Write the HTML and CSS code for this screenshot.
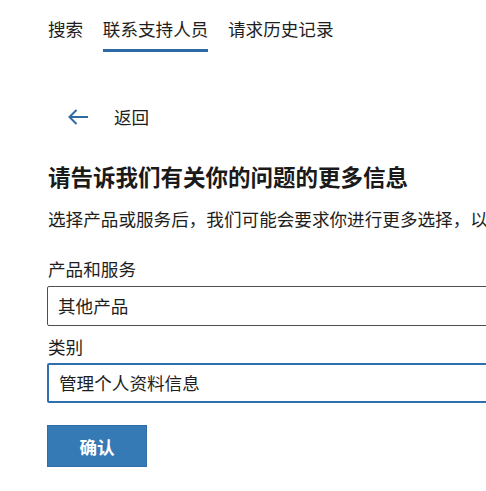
FILE: index.html
```html
<!DOCTYPE html>
<html lang="zh-CN">
<head>
<meta charset="utf-8">
<title>联系支持人员</title>
<link rel="stylesheet" href="styles.css">
</head>
<body>
<div class="page">
  <nav class="tabs">
    <a class="tab">搜索</a>
    <a class="tab active">联系支持人员</a>
    <a class="tab">请求历史记录</a>
  </nav>
  <div class="back">
    <svg class="back-icon" width="22" height="18" viewBox="0 0 22 18" aria-hidden="true">
      <path d="M21 9H2.5 M9.5 2L2.5 9l7 7" fill="none" stroke="#2f6aa3" stroke-width="2"/>
    </svg>
    <span class="back-text">返回</span>
  </div>
  <h1 class="title">请告诉我们有关你的问题的更多信息</h1>
  <p class="desc">选择产品或服务后，我们可能会要求你进行更多选择，以便我们更好地为你提供帮助。</p>
  <div class="form">
    <div class="label label-first">产品和服务</div>
    <div class="field">其他产品</div>
    <div class="label label-second">类别</div>
    <div class="field field-focus">管理个人资料信息</div>
    <button class="confirm">确认</button>
  </div>
</div>
</body>
</html>
```

FILE: styles.css
```css
html, body {
  margin: 0;
  padding: 0;
  overflow: hidden;
  background: #ffffff;
}
body {
  font-family: "Noto Sans CJK SC", "Noto Sans", sans-serif;
  font-size: 17.6px;
  color: #1e1e1e;
}
.page {
  padding-left: 48px;
  width: 560px;
}
.tabs {
  display: flex;
  gap: 19.6px;
  padding-top: 17px;
}
.tab {
  line-height: 24px;
  padding-bottom: 8px;
  border-bottom: 3px solid transparent;
  white-space: nowrap;
}
.tab.active {
  border-bottom-color: #2c6aa6;
}
.back {
  display: flex;
  align-items: center;
  margin-top: 53px;
  padding-left: 19px;
  height: 24px;
}
.back-icon {
  display: block;
  margin-right: 25px;
}
.back-text {
  line-height: 24px;
}
.title {
  margin: 32px 0 0;
  font-size: 22.5px;
  font-weight: bold;
  line-height: 30px;
  color: #1a1a1a;
}
.desc {
  margin: 16px 0 0;
  line-height: 24px;
  white-space: nowrap;
}
.form {
  width: 500px;
}
.label {
  line-height: 24px;
}
.label-first {
  margin-top: 26px;
}
.label-second {
  margin-top: 9px;
}
.field {
  box-sizing: border-box;
  height: 40px;
  margin-top: 5px;
  margin-left: -1px;
  padding-left: 10px;
  border: 1px solid #4f4f4f;
  border-radius: 2px;
  line-height: 38px;
  white-space: nowrap;
}
.field-focus {
  margin-top: 4px;
  border: 2px solid #2f6fad;
  line-height: 36px;
}
.confirm {
  display: block;
  box-sizing: border-box;
  width: 100px;
  height: 42px;
  margin-top: 22px;
  margin-left: -1px;
  border: 1px solid #2e6da6;
  background: #3579b5;
  color: #ffffff;
  font-family: inherit;
  font-size: 17.6px;
  font-weight: bold;
  padding: 0;
}
```
